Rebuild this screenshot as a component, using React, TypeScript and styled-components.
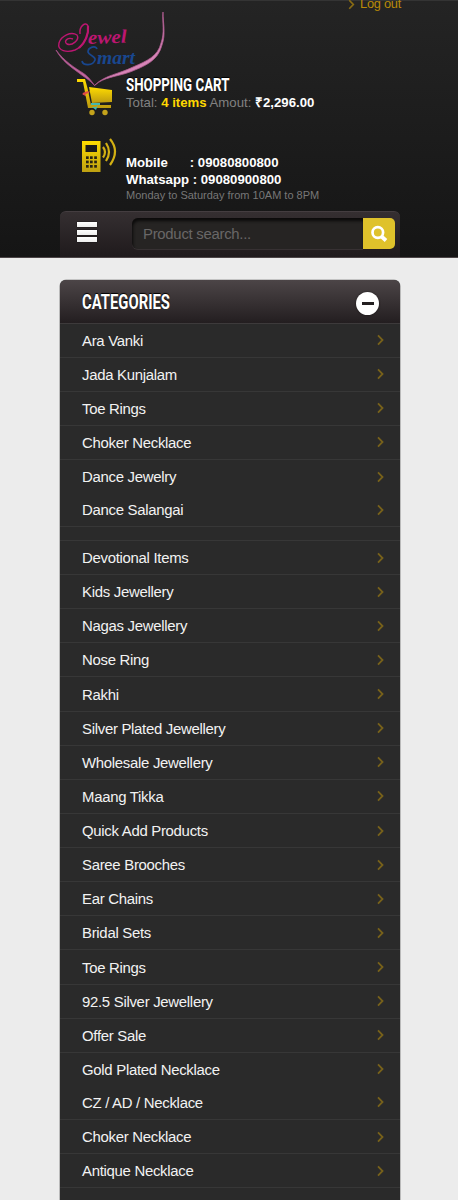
import React from "react";
import styled, { createGlobalStyle } from "styled-components";

const GlobalStyle = createGlobalStyle`
  html, body { margin: 0; padding: 0; background: #ececec; }
  body { font-family: "Liberation Sans", Arial, sans-serif; overflow: hidden; }
  * { box-sizing: border-box; }
`;

const Page = styled.div`
  width: 458px;
  height: 1200px;
  overflow: hidden;
  background: #ececec;
`;

const Header = styled.header`
  position: relative;
  height: 258px;
  padding: 0 58px 0 60px;
  background: linear-gradient(#242424, #151515);
  border-top: 1px solid #343434;
  border-bottom: 1px solid #4c4547;
  display: flex;
  flex-direction: column;
`;

const AccountBar = styled.div`
  height: 74px;
  display: flex;
  justify-content: flex-end;
  align-items: flex-start;
`;

const LogoutLink = styled.a`
  display: flex;
  align-items: center;
  gap: 5px;
  margin: -4px -1px 0 0;
  font-size: 12.8px;
  letter-spacing: -0.25px;
  line-height: 14px;
  color: #b98a08;
  white-space: nowrap;
`;

const Logo = styled.svg`
  position: absolute;
  left: 50px;
  top: 3px;
`;

const InfoRow = styled.section<{ $height: number }>`
  position: relative;
  height: ${(p) => p.$height}px;
  display: flex;
  align-items: flex-start;
`;

const IconSlot = styled.div<{ $left: number; $top: number }>`
  width: 66px;
  flex: none;
  padding-left: ${(p) => p.$left}px;
  padding-top: ${(p) => p.$top}px;
  svg { display: block; }
`;

const InfoText = styled.div<{ $top?: number }>`
  padding-top: ${(p) => p.$top || 0}px;
  white-space: nowrap;
`;

const Heading = styled.h2<{ $size: number; $stretch: number }>`
  margin: 0;
  font-family: Roboto, "Liberation Sans", sans-serif;
  font-weight: 700;
  font-size: ${(p) => p.$size}px;
  line-height: 21px;
  color: #fff;
  transform: scaleX(${(p) => p.$stretch});
  transform-origin: 0 50%;
  text-shadow: 0 -1px 1px #000;
  white-space: nowrap;
`;

const CartLine = styled.p`
  margin: -1px 0 0;
  font-size: 13.2px;
  line-height: 16px;
  color: #828282;
  b { color: #fff; }
  b:first-child { color: #ffd800; }
`;

const Phone = styled.p`
  margin: 0;
  font-size: 13.2px;
  font-weight: 700;
  line-height: 17px;
  color: #fff;
  white-space: pre;
`;

const Hours = styled.p`
  margin: 0;
  font-size: 11px;
  line-height: 15px;
  color: #777;
`;

const SearchBar = styled.div`
  width: 340px;
  height: 46px;
  padding: 7px 5px 0 16px;
  display: flex;
  align-items: flex-start;
  border-radius: 6px 6px 0 0;
  border-top: 1px solid #443d40;
  background: linear-gradient(#352f31, #1f1a1c);
`;

const MenuButton = styled.button`
  width: 22px;
  height: 22px;
  padding: 0;
  margin: 3px 33px 0 1px;
  border: 0;
  background: none;
  display: flex;
  flex-direction: column;
  gap: 2.6px;
`;

const MenuBar = styled.span`
  display: block;
  width: 20px;
  height: 5px;
  background: linear-gradient(#fff, #ececec);
  box-shadow: 0 0 1px #000;
`;

const SearchField = styled.div`
  width: 231px;
  height: 31px;
  padding-left: 11px;
  margin-top: -1px;
  border-radius: 6px 0 0 6px;
  background: #262423;
  box-shadow: inset 1px 3px 3px #0c0b0b, 0 1px 0 #373133;
  font-size: 14.9px;
  letter-spacing: -0.27px;
  line-height: 32px;
  color: #696767;
`;

const SearchButton = styled.button`
  width: 32px;
  height: 31px;
  padding: 0;
  margin-top: -1px;
  border: 0;
  border-radius: 0 5px 5px 0;
  background: #dfc22b;
  display: flex;
  align-items: center;
  justify-content: center;
`;

const Panel = styled.nav`
  margin: 22px 58px 0 60px;
  width: 340px;
  height: 940px;
  background: #2a2a2a;
  border-radius: 6px 6px 0 0;
  box-shadow: 0 0 0 0.6px #999;
`;

const PanelHeader = styled.div`
  height: 43.5px;
  padding: 2px 21px 0 22px;
  display: flex;
  align-items: center;
  justify-content: space-between;
  border-radius: 6px 6px 0 0;
  background: linear-gradient(#4c4547, #231e20);
  border-bottom: 1px solid #3d3a3b;
`;

const Collapse = styled.span`
  width: 23px;
  height: 23px;
  margin-top: 2px;
  border-radius: 50%;
  background: #fff;
  display: flex;
  align-items: center;
  justify-content: center;
  box-shadow: 0 0 2px #151213;
  &::after {
    content: "";
    width: 12px;
    height: 3px;
    background: #231f20;
  }
`;

const Item = styled.a<{ $line: boolean }>`
  height: ${(p) => (p.$line ? 34.13 : 33.05)}px;
  padding: 0 16px 0 22px;
  display: flex;
  align-items: center;
  justify-content: space-between;
  font-size: 14.93px;
  letter-spacing: -0.29px;
  line-height: 17px;
  color: #f2f2f2;
  border-bottom: ${(p) => (p.$line ? "1px solid #373737" : "0")};
`;

const Spacer = styled.div`
  height: 13.8px;
  border-bottom: 1px solid #373737;
`;

const Chevron = ({ color = "#78621b", h = 12 }: { color?: string; h?: number }) => (
  <svg width="7" height={h} viewBox="0 0 7 12" fill="none">
    <path d="M1 1.4L5.5 6L1 10.6" stroke={color} strokeWidth="1.8" />
  </svg>
);

const CATEGORIES = [
  "Ara Vanki", "Jada Kunjalam", "Toe Rings", "Choker Necklace", "Dance Jewelry",
  "Dance Salangai", "Devotional Items", "Kids Jewellery", "Nagas Jewellery",
  "Nose Ring", "Rakhi", "Silver Plated Jewellery", "Wholesale Jewellery",
  "Maang Tikka", "Quick Add Products", "Saree Brooches", "Ear Chains",
  "Bridal Sets", "Toe Rings", "92.5 Silver Jewellery", "Offer Sale",
  "Gold Plated Necklace", "CZ / AD / Necklace", "Choker Necklace", "Antique Necklace",
];
const NO_LINE = ["Dance Jewelry", "Gold Plated Necklace"];

const JewelLogo = () => (
  <Logo width="122" height="112" viewBox="50 4 122 112" fill="none">
    <path d="M56 50C64 61 75 68 83 73C89 77 92 82 95 86C90 80 84 77 79 73C71 67 62 61 56 50Z" fill="#c267a0" stroke="#a34f85" strokeWidth=".8" />
    <path d="M163 12C163 23 166 34 162 45C158 61 145 66 130 72C116 77 104 77 95 85C105 75 119 74 133 67C147 61 158 56 161 43C165 32 162 23 163 12Z" fill="#d685b7" stroke="#b05c91" strokeWidth=".8" />
    <path d="M80 34C79 26 86 21 88 26C89 35 84 46 75 50C67 53 57 51 59 43C61 36 71 31 77 35C80 40 72 46 67 44C63 41 68 37 73 39" stroke="#bc1671" strokeWidth="1.4" />
    <path d="M88 26C89 34 85 43 79 48" stroke="#bc1671" strokeWidth="2.2" />
    <g fontFamily="Liberation Serif, serif" fontStyle="italic" fontWeight="700">
      <text x="88" y="44" fontSize="19" textLength="39" lengthAdjust="spacingAndGlyphs" fill="#bc1671" transform="rotate(-2 88 44)">ewel</text>
      <text x="97" y="64" fontSize="18" textLength="38" lengthAdjust="spacingAndGlyphs" fill="#19478f">mart</text>
    </g>
    <path d="M97 49C96 45 88 47 88 52C89 56 96 56 95 60C93 66 83 66 82 61" stroke="#19478f" strokeWidth="1.7" />
    <path d="M82 94L90 91L87 97Z" fill="#c5335f" />
  </Logo>
);

const CartIcon = () => (
  <svg width="38" height="38" viewBox="76 78 38 38" fill="none">
    <defs>
      <linearGradient id="cartGold" x1="0" y1="0" x2="0" y2="1">
        <stop stopColor="#ffdc00" /><stop offset="1" stopColor="#bd9b10" />
      </linearGradient>
    </defs>
    <path d="M77 79H85L87.5 88L91 105H111V108H88L83 82H77Z" fill="url(#cartGold)" />
    <path d="M89 87L112 90V102L92 103Z" fill="url(#cartGold)" />
    <path d="M91 103H100V105H98L96 110L92 107H96L98 105H91Z" fill="#45b9ae" />
    <circle cx="92" cy="112.5" r="2.7" fill="#c4a31b" />
    <circle cx="105" cy="112.5" r="2.7" fill="#c4a31b" />
    <path d="M83 94L88 92" stroke="#e34c43" strokeWidth="2" />
  </svg>
);

const PhoneIcon = () => (
  <svg width="36" height="36" viewBox="81 137 36 36" fill="none">
    <defs>
      <linearGradient id="phoneGold" x1="0" y1="0" x2="0" y2="1">
        <stop stopColor="#ffdc00" /><stop offset="1" stopColor="#bda012" />
      </linearGradient>
    </defs>
    <path fillRule="evenodd" fill="url(#phoneGold)" d="M82 141H100.5V172H82ZM85.5 145V152H97V145Z" />
    {[156.3, 160.6, 165].map((y) => [86, 90, 94.2].map((x) => (
      <rect key={`${x}-${y}`} x={x} y={y} width="2.7" height="2.7" fill="#282415" />
    )))}
    <path d="M103 147Q107 152 103 157.5M106 143Q112 152 106 161M110 139Q120 151 110 165" stroke="#d3b013" strokeWidth="2.2" />
  </svg>
);

export default function App() {
  return (
    <Page>
      <GlobalStyle />
      <Header>
        <JewelLogo />
        <AccountBar><LogoutLink><Chevron color="#8a6c13" h={11} />Log out</LogoutLink></AccountBar>
        <InfoRow $height={62}>
          <IconSlot $left={16} $top={3}><CartIcon /></IconSlot>
          <InfoText>
            <Heading $size={17.6} $stretch={0.755}>SHOPPING CART</Heading>
            <CartLine>Total: <b>4 items</b> Amout: <b>₹2,296.00</b></CartLine>
          </InfoText>
        </InfoRow>
        <InfoRow $height={74}>
          <IconSlot $left={21} $top={0}><PhoneIcon /></IconSlot>
          <InfoText $top={17}>
            <Phone>{"Mobile      : 09080800800"}</Phone>
            <Phone>Whatsapp : 09080900800</Phone>
            <Hours>Monday to Saturday from 10AM to 8PM</Hours>
          </InfoText>
        </InfoRow>
        <SearchBar>
          <MenuButton aria-label="Menu"><MenuBar /><MenuBar /><MenuBar /></MenuButton>
          <SearchField>Product search...</SearchField>
          <SearchButton aria-label="Search">
            <svg width="18" height="18" viewBox="0 0 18 18" fill="none" stroke="#fff">
              <circle cx="7.8" cy="7.5" r="5.3" strokeWidth="2.7" />
              <path d="M11.5 11.5L16 15.5" strokeWidth="3.8" />
            </svg>
          </SearchButton>
        </SearchBar>
      </Header>
      <Panel>
        <PanelHeader>
          <Heading $size={19.6} $stretch={0.757}>CATEGORIES</Heading>
          <Collapse />
        </PanelHeader>
        {CATEGORIES.map((name, i) => (
          <React.Fragment key={i}>
            <Item $line={!NO_LINE.includes(name)}><span>{name}</span><Chevron /></Item>
            {name === "Dance Salangai" && <Spacer />}
          </React.Fragment>
        ))}
      </Panel>
    </Page>
  );
}
